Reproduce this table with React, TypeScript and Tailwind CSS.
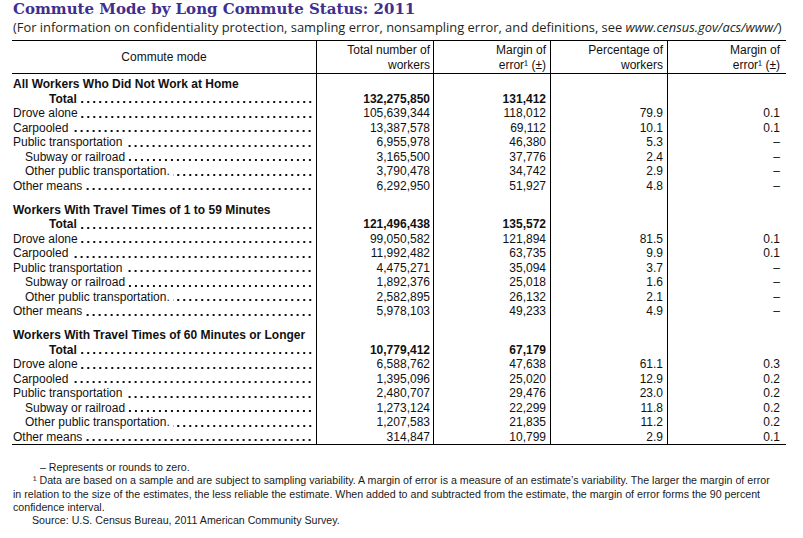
import React from "react";

type R = { label: string; kind: "norm" | "sub" | "total"; v: [string, string, string, string] };

const sections: { title: string; rows: R[] }[] = [
  {
    title: "All Workers Who Did Not Work at Home",
    rows: [
      { label: "Total", kind: "total", v: ["132,275,850", "131,412", "", ""] },
      { label: "Drove alone", kind: "norm", v: ["105,639,344", "118,012", "79.9", "0.1"] },
      { label: "Carpooled", kind: "norm", v: ["13,387,578", "69,112", "10.1", "0.1"] },
      { label: "Public transportation", kind: "norm", v: ["6,955,978", "46,380", "5.3", "–"] },
      { label: "Subway or railroad", kind: "sub", v: ["3,165,500", "37,776", "2.4", "–"] },
      { label: "Other public transportation.", kind: "sub", v: ["3,790,478", "34,742", "2.9", "–"] },
      { label: "Other means", kind: "norm", v: ["6,292,950", "51,927", "4.8", "–"] },
    ],
  },
  {
    title: "Workers With Travel Times of 1 to 59 Minutes",
    rows: [
      { label: "Total", kind: "total", v: ["121,496,438", "135,572", "", ""] },
      { label: "Drove alone", kind: "norm", v: ["99,050,582", "121,894", "81.5", "0.1"] },
      { label: "Carpooled", kind: "norm", v: ["11,992,482", "63,735", "9.9", "0.1"] },
      { label: "Public transportation", kind: "norm", v: ["4,475,271", "35,094", "3.7", "–"] },
      { label: "Subway or railroad", kind: "sub", v: ["1,892,376", "25,018", "1.6", "–"] },
      { label: "Other public transportation.", kind: "sub", v: ["2,582,895", "26,132", "2.1", "–"] },
      { label: "Other means", kind: "norm", v: ["5,978,103", "49,233", "4.9", "–"] },
    ],
  },
  {
    title: "Workers With Travel Times of 60 Minutes or Longer",
    rows: [
      { label: "Total", kind: "total", v: ["10,779,412", "67,179", "", ""] },
      { label: "Drove alone", kind: "norm", v: ["6,588,762", "47,638", "61.1", "0.3"] },
      { label: "Carpooled", kind: "norm", v: ["1,395,096", "25,020", "12.9", "0.2"] },
      { label: "Public transportation", kind: "norm", v: ["2,480,707", "29,476", "23.0", "0.2"] },
      { label: "Subway or railroad", kind: "sub", v: ["1,273,124", "22,299", "11.8", "0.2"] },
      { label: "Other public transportation.", kind: "sub", v: ["1,207,583", "21,835", "11.2", "0.2"] },
      { label: "Other means", kind: "norm", v: ["314,847", "10,799", "2.9", "0.1"] },
    ],
  },
];

const GRID = "grid grid-cols-[305px_117px_117px_117px_118px]";

function Cells({ v }: { v: [string, string, string, string] }) {
  return (
    <>
      <div className="border-r border-black text-right pr-[3px] whitespace-nowrap">{v[0]}</div>
      <div className="border-r border-black text-right pr-[4px] whitespace-nowrap">{v[1]}</div>
      <div className="border-r border-black text-right pr-[4px] whitespace-nowrap">{v[2]}</div>
      <div className="text-right pr-[6px] whitespace-nowrap">{v[3]}</div>
    </>
  );
}

function DataRow({ r }: { r: R }) {
  const indent = r.kind === "total" ? "pl-[37px]" : r.kind === "sub" ? "pl-[13px]" : "pl-[1px]";
  const dots =
    r.kind === "total"
      ? "bg-[radial-gradient(circle,#111_1px,transparent_1.4px)]"
      : "bg-[radial-gradient(circle,#111_0.75px,transparent_1.15px)]";
  return (
    <div className={`${GRID} h-[14.5px] leading-[14.5px] ${r.kind === "total" ? "font-bold" : ""}`}>
      <div className="flex border-r border-black min-w-0 pr-[3px]">
        <span className={`whitespace-nowrap shrink-0 ${indent}`}>{r.label}</span>
        <span
          className={`flex-1 min-w-0 ml-[3px] h-full bg-repeat-x bg-[length:6px_6px] bg-[position:right_0_top_7.5px] ${dots}`}
        />
      </div>
      <Cells v={r.v} />
    </div>
  );
}

function HeadRow({ title }: { title: string }) {
  return (
    <div className={`${GRID} h-[14.5px] leading-[14.5px] font-bold`}>
      <div className="border-r border-black pl-[1px] whitespace-nowrap">{title}</div>
      <Cells v={["", "", "", ""]} />
    </div>
  );
}

function Spacer({ h }: { h: string }) {
  return (
    <div className={`${GRID} ${h}`}>
      <div className="border-r border-black" />
      <div className="border-r border-black" />
      <div className="border-r border-black" />
      <div className="border-r border-black" />
      <div />
    </div>
  );
}

export default function App() {
  return (
    <div className="w-[803px] h-[538px] bg-white overflow-hidden pl-[12px] text-[#111]">
      <div className="pl-[1px] font-['DejaVu_Serif',serif] font-bold text-[15px] leading-[19px] text-[#3f2f8e] whitespace-nowrap">
        Commute Mode by Long Commute Status: 2011
      </div>
      <div className="pl-[1px] font-['Open_Sans',sans-serif] text-[12.9px] leading-[17px] text-[#231f20] whitespace-nowrap">
        (For information on confidentiality protection, sampling error, nonsampling error, and definitions, see{" "}
        <span className="italic">www.census.gov/acs/www/</span>)
      </div>
      <div className="mt-[4px] w-[774px] font-['Liberation_Sans',Arial,sans-serif] text-[12px] border-t border-b border-black">
        <div className={`${GRID} h-[33px] border-b border-black leading-[14.5px]`}>
          <div className="border-r border-black flex items-center justify-center">Commute mode</div>
          <div className="border-r border-black text-right pr-[3px] pt-[2px]">
            Total number of
            <br />
            workers
          </div>
          <div className="border-r border-black text-right pr-[4px] pt-[2px]">
            Margin of
            <br />
            error¹ (±)
          </div>
          <div className="border-r border-black text-right pr-[4px] pt-[2px]">
            Percentage of
            <br />
            workers
          </div>
          <div className="text-right pr-[6px] pt-[2px]">
            Margin of
            <br />
            error¹ (±)
          </div>
        </div>
        <Spacer h="h-[3px]" />
        {sections.map((s, i) => (
          <React.Fragment key={s.title}>
            {i > 0 && <Spacer h="h-[9.5px]" />}
            <HeadRow title={s.title} />
            {s.rows.map((r, j) => (
              <DataRow key={j} r={r} />
            ))}
          </React.Fragment>
        ))}
      </div>
      <div className="mt-[16px] w-[780px] font-['Liberation_Sans',Arial,sans-serif] text-[10.65px] leading-[13.3px] text-[#1a1a1a] whitespace-nowrap">
        <p className="pl-[28px]">– Represents or rounds to zero.</p>
        <p className="pl-[21px]">
          ¹ Data are based on a sample and are subject to sampling variability. A margin of error is a measure of an
          estimate’s variability. The larger the margin of error
        </p>
        <p className="pl-[1px]">
          in relation to the size of the estimates, the less reliable the estimate. When added to and subtracted from the
          estimate, the margin of error forms the 90 percent
        </p>
        <p className="pl-[1px]">confidence interval.</p>
        <p className="pl-[20px]">Source: U.S. Census Bureau, 2011 American Community Survey.</p>
      </div>
    </div>
  );
}
